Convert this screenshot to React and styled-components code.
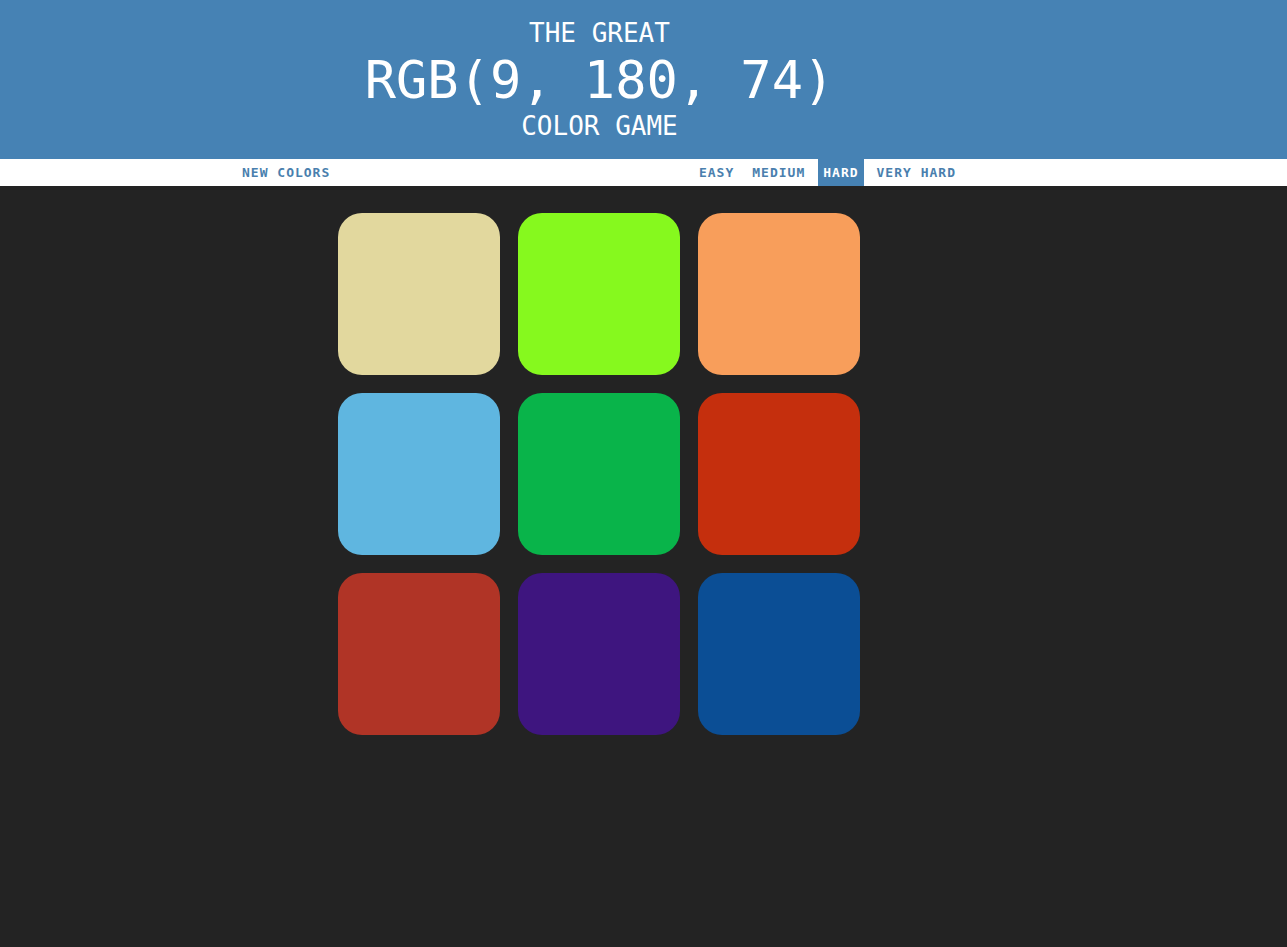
import React from "react";
import styled, { createGlobalStyle } from "styled-components";

const Global = createGlobalStyle`
  html, body { margin: 0; padding: 0; }
  body {
    background: #232323;
    font-family: "DejaVu Sans Mono", "Liberation Mono", monospace;
    min-height: 947px;
  }
`;

const Page = styled.div`
  width: 100%;
`;

const Header = styled.header`
  background: steelblue;
  color: #fff;
  padding: 18px 0 19px;
`;

const Inner = styled.div`
  width: 1199px;
  text-align: center;
`;

const Line = styled.span`
  display: block;
  font-size: ${(p) => p.$size}px;
  line-height: ${(p) => p.$lh}px;
  font-weight: 400;
  text-transform: uppercase;
`;

const Nav = styled.nav`
  background: #fff;
  height: 27px;
`;

const NavInner = styled.div`
  width: 724px;
  margin-left: 237px;
  display: flex;
  justify-content: space-between;
  align-items: stretch;
  height: 27px;
`;

const Modes = styled.div`
  display: flex;
  gap: 8px;
`;

const NavButton = styled.button`
  border: none;
  margin: 0;
  padding: 0 5px;
  height: 27px;
  line-height: 27px;
  font-family: "DejaVu Sans Mono", "Liberation Mono", monospace;
  font-size: 13px;
  font-weight: 700;
  letter-spacing: 1px;
  text-transform: uppercase;
  cursor: pointer;
  background: ${(p) => (p.$selected ? "steelblue" : "#fff")};
  color: ${(p) => (p.$selected ? "#fff" : "#4a7fae")};
`;

const Grid = styled.div`
  margin: 27px 0 0 338px;
  width: 522px;
  display: grid;
  grid-template-columns: repeat(3, 162px);
  grid-auto-rows: 162px;
  gap: 18px;
`;

const Square = styled.div`
  border-radius: 24px;
  background: ${(p) => p.$color};
`;

const colors = [
  "rgb(226, 216, 158)",
  "rgb(134, 249, 30)",
  "rgb(248, 158, 91)",
  "rgb(95, 182, 224)",
  "rgb(9, 180, 74)",
  "rgb(197, 47, 13)",
  "rgb(176, 52, 38)",
  "rgb(62, 21, 127)",
  "rgb(11, 78, 149)",
];

export default function App() {
  return (
    <Page>
      <Global />
      <Header>
        <Inner>
          <Line $size={26} $lh={30}>The Great</Line>
          <Line $size={52} $lh={64}>RGB(9, 180, 74)</Line>
          <Line $size={26} $lh={28}>Color Game</Line>
        </Inner>
      </Header>
      <Nav>
        <NavInner>
          <NavButton>New Colors</NavButton>
          <Modes>
            <NavButton>Easy</NavButton>
            <NavButton>Medium</NavButton>
            <NavButton $selected>Hard</NavButton>
            <NavButton>Very Hard</NavButton>
          </Modes>
        </NavInner>
      </Nav>
      <Grid>
        {colors.map((c, i) => (
          <Square key={i} $color={c} />
        ))}
      </Grid>
    </Page>
  );
}
